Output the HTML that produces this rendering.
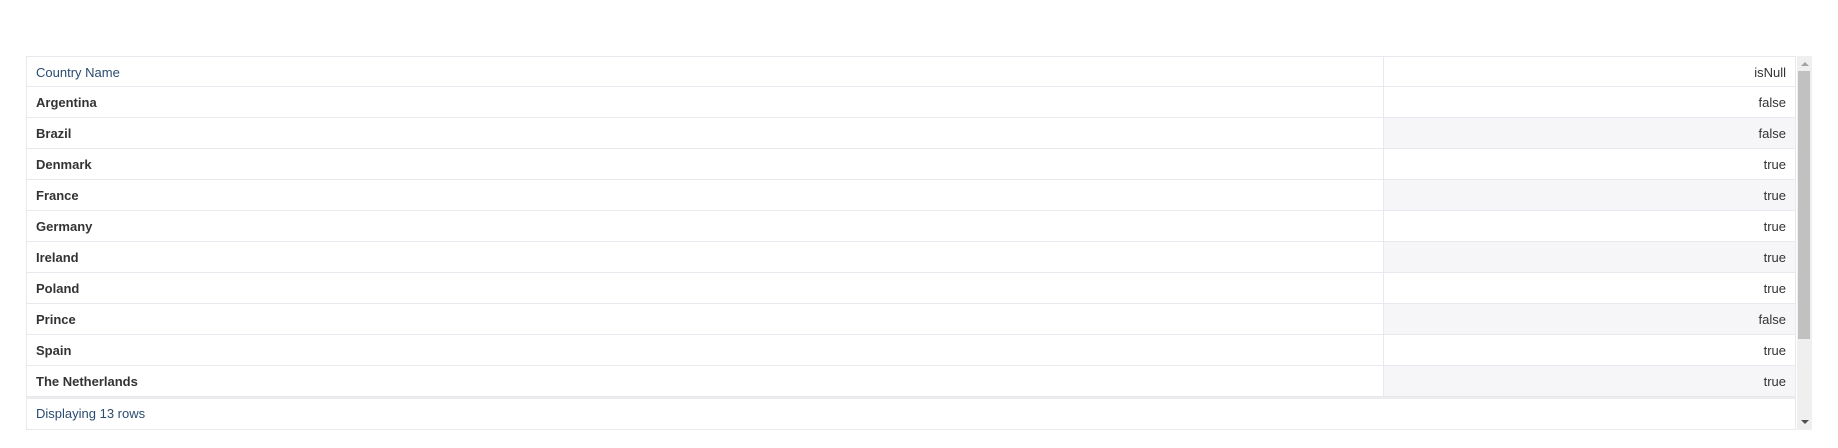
<!DOCTYPE html>
<html><head><meta charset="utf-8"><style>
html,body{margin:0;padding:0;background:#fff;width:1838px;height:448px;overflow:hidden;font-family:"Liberation Sans",Arial,sans-serif;}
.t{position:absolute;left:26px;top:56px;width:1770px;}
.r{position:absolute;left:0;width:1770px;height:31px;box-sizing:border-box;}
.c1{position:absolute;left:0;top:0;width:1358px;height:31px;box-sizing:border-box;border:1px solid #e8e9ee;border-top:none;border-right:1px solid #e8e9ee;padding-left:9px;line-height:31px;font-size:13px;color:#333;font-weight:bold;}
.c2{position:absolute;left:1358px;top:0;width:412px;height:31px;box-sizing:border-box;border-bottom:1px solid #e8e9ee;border-right:1px solid #e8e9ee;text-align:right;padding-right:9px;line-height:31px;font-size:13px;color:#333;}
.alt .c2{background:#f6f6f8;}
.h .c1,.h .c2{font-weight:normal;border-top:1px solid #e8e9ee;}
.h .c1{color:#2a4b70;}
.f{position:absolute;left:26px;top:397px;width:1770px;height:33px;box-sizing:border-box;border:1px solid #e8e9ee;border-top:2px solid #ececef;padding-left:9px;line-height:30px;font-size:13px;color:#2a4b70;}
.sb{position:absolute;left:1797px;top:56px;width:15px;height:374px;background:#efefef;}
.th{position:absolute;left:1798px;top:71px;width:12px;height:268px;background:#c1c1c1;}
.up{position:absolute;left:1801px;top:62px;width:0;height:0;border-left:4px solid transparent;border-right:4px solid transparent;border-bottom:4px solid #a3a3a3;}
.dn{position:absolute;left:1801px;top:420px;width:0;height:0;border-left:4px solid transparent;border-right:4px solid transparent;border-top:4px solid #505050;}
</style></head><body>
<div class="t">
<div class="r h" style="top:0"><div class="c1">Country Name</div><div class="c2">isNull</div></div>
<div class="r" style="top:31px"><div class="c1">Argentina</div><div class="c2">false</div></div>
<div class="r alt" style="top:62px"><div class="c1">Brazil</div><div class="c2">false</div></div>
<div class="r" style="top:93px"><div class="c1">Denmark</div><div class="c2">true</div></div>
<div class="r alt" style="top:124px"><div class="c1">France</div><div class="c2">true</div></div>
<div class="r" style="top:155px"><div class="c1">Germany</div><div class="c2">true</div></div>
<div class="r alt" style="top:186px"><div class="c1">Ireland</div><div class="c2">true</div></div>
<div class="r" style="top:217px"><div class="c1">Poland</div><div class="c2">true</div></div>
<div class="r alt" style="top:248px"><div class="c1">Prince</div><div class="c2">false</div></div>
<div class="r" style="top:279px"><div class="c1">Spain</div><div class="c2">true</div></div>
<div class="r alt" style="top:310px"><div class="c1">The Netherlands</div><div class="c2">true</div></div>
</div>
<div class="f">Displaying 13 rows</div>
<div class="sb"></div><div class="th"></div><div class="up"></div><div class="dn"></div>
</body></html>
